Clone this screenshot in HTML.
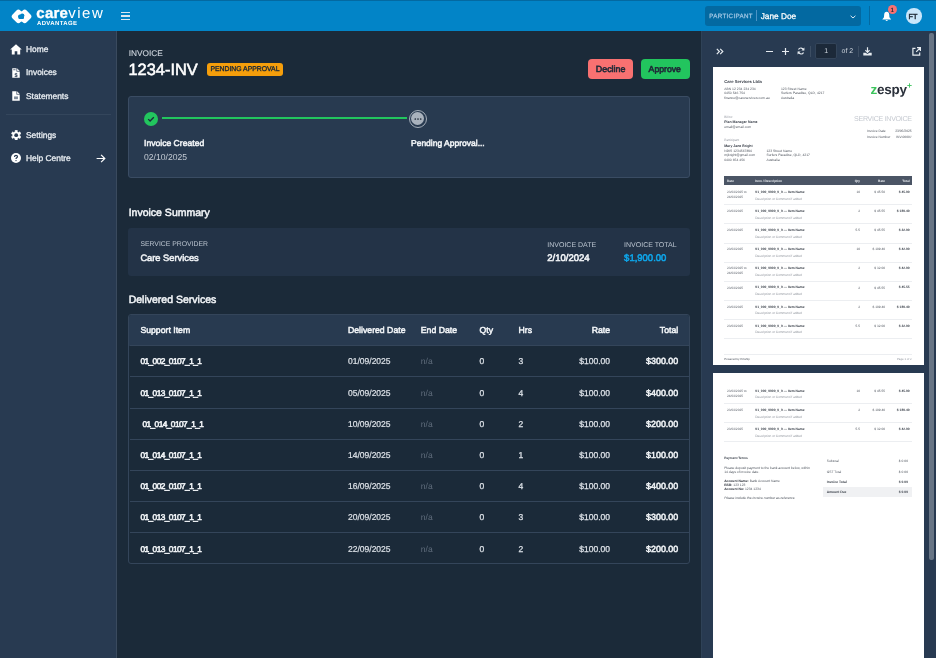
<!DOCTYPE html>
<html><head><meta charset="utf-8">
<style>
*{box-sizing:border-box;margin:0;padding:0}
.L{will-change:transform}
html,body{width:936px;height:658px;overflow:hidden;background:#1b2a39;font-family:"Liberation Sans",sans-serif;color:#fff;text-rendering:geometricPrecision}
.a{position:absolute;line-height:1;white-space:nowrap}
#hdr{position:absolute;left:0;top:0;width:936px;height:31px;background:#0284c7;border-top:1px solid #0369a1}
#side{position:absolute;left:0;top:31px;width:117px;height:627px;background:#283a51;border-right:1px solid #3a4a5e}
#main{position:absolute;left:117px;top:31px;width:584px;height:627px;background:#1b2a39}
#pdf{position:absolute;left:701px;top:31px;width:235px;height:627px;background:#283a51;border-left:1px solid #2f4257;text-rendering:geometricPrecision}
.b{font-weight:bold}
</style></head><body>
<div id="hdr" class="L">
 <svg class="a" style="left:0px;top:-1.00px" width="40" height="31" viewBox="0 0 40 31"><g fill="#fff"><rect x="12.9" y="10.9" width="11" height="11" rx="2.8" transform="rotate(45 18.4 16.4)"/><rect x="19.2" y="10.9" width="11" height="11" rx="2.8" transform="rotate(45 24.7 16.4)"/><rect x="18" y="11.5" width="7" height="10" /></g><g fill="#0284c7"><rect x="18.4" y="15.2" width="5.6" height="3.9" rx="1.1"/><circle cx="19.9" cy="16.4" r="1.8"/><circle cx="22.2" cy="15.6" r="2.2"/></g></svg>
 <div class="a" style="left:36.3px;top:4.50px;font-size:15px;font-weight:bold;letter-spacing:0.25px;-webkit-text-stroke:0.35px #fff">care<span style="font-weight:normal;letter-spacing:1.55px;-webkit-text-stroke:0">view</span></div>
 <div class="a" style="left:37px;top:20.00px;font-size:6px;font-weight:bold;letter-spacing:0.35px">ADVANTAGE</div>
 <div class="a" style="left:121.3px;top:11.20px;width:8.8px;height:1.3px;background:#dbe8f2"></div>
 <div class="a" style="left:121.3px;top:14.40px;width:8.8px;height:1.3px;background:#dbe8f2"></div>
 <div class="a" style="left:121.3px;top:17.60px;width:8.8px;height:1.3px;background:#dbe8f2"></div>
 <div class="a" style="left:705.3px;top:5.20px;width:156px;height:19.4px;background:#0369a1;border-radius:3px"></div>
 <div class="a" style="left:709.2px;top:13.02px;font-size:6.2px;color:#9fc6e4;letter-spacing:0.35px;-webkit-text-stroke:0.25px #9fc6e4">PARTICIPANT</div>
 <div class="a" style="left:756.3px;top:9.10px;width:1px;height:11.3px;background:#4a93c6"></div>
 <div class="a" style="left:760.7px;top:10.74px;font-size:8.3px;color:#fff;-webkit-text-stroke:0.25px #fff">Jane Doe</div>
 <svg class="a" style="left:849.6px;top:14.10px" width="6" height="4" viewBox="0 0 6 4"><path d="M0.6 0.8 L3 3 L5.4 0.8" stroke="#dce9f3" stroke-width="1" fill="none"/></svg>
 <div class="a" style="left:869.2px;top:5.20px;width:1px;height:19px;background:#0369a1"></div>
 <svg class="a" style="left:881.8px;top:9.60px" width="9.4" height="10.5" viewBox="0 0 10 11"><path d="M5 0.8 C3.3 0.8 2.4 2.2 2.3 4 L2.1 6.6 L0.3 8.9 L9.7 8.9 L7.9 6.6 L7.7 4 C7.6 2.2 6.7 0.8 5 0.8 Z" fill="#fff"/><path d="M3.8 9.6 C3.8 10.8 6.2 10.8 6.2 9.6 Z" fill="#fff"/></svg>
 <div class="a" style="left:887.9px;top:4.30px;width:9px;height:9px;border-radius:50%;background:#f87171"></div>
 <div class="a" style="left:890.6px;top:6.50px;font-size:6.2px;font-weight:bold;color:#1f2a37">1</div>
 <div class="a" style="left:906px;top:7.00px;width:15.6px;height:15.6px;border-radius:50%;background:#c9e6fb"></div>
 <div class="a" style="left:908.6px;top:11.70px;font-size:7.3px;color:#1f2a37;-webkit-text-stroke:0.45px #1f2a37">FT</div>
</div>
<div id="side" class="L">
 <svg class="a" style="left:10px;top:12.60px" width="12" height="11" viewBox="0 0 12 11"><path d="M6 0.3 L11.8 5.6 L10.2 5.6 L10.2 10.5 L7.3 10.5 L7.3 7.3 L4.7 7.3 L4.7 10.5 L1.8 10.5 L1.8 5.6 L0.2 5.6 Z" fill="#fff"/></svg>
 <div class="a" style="left:26px;top:13.77px;font-size:8.4px;color:#e8edf2;-webkit-text-stroke:0.3px #e8edf2">Home</div>
 <svg class="a" style="left:11.6px;top:36.80px" width="8" height="10" viewBox="0 0 9 11" preserveAspectRatio="none"><path d="M0.3 0.3 L5.6 0.3 L8.7 3.4 L8.7 10.7 L0.3 10.7 Z" fill="#fff"/><path d="M5.3 0 L5.3 3.7 L9 3.7" fill="none" stroke="#283a51" stroke-width="0.7"/><text x="4.5" y="9.6" font-size="6.2" font-family="Liberation Sans" font-weight="bold" fill="#283a51" text-anchor="middle">$</text><rect x="1.4" y="1.6" width="2.6" height="0.8" fill="#283a51"/></svg>
 <div class="a" style="left:26px;top:37.17px;font-size:8.4px;color:#e8edf2;-webkit-text-stroke:0.3px #e8edf2">Invoices</div>
 <svg class="a" style="left:11.6px;top:60.00px" width="8" height="10" viewBox="0 0 9 11" preserveAspectRatio="none"><path d="M0.3 0.3 L5.6 0.3 L8.7 3.4 L8.7 10.7 L0.3 10.7 Z" fill="#fff"/><path d="M5.3 0 L5.3 3.7 L9 3.7" fill="none" stroke="#283a51" stroke-width="0.7"/><rect x="2.3" y="6" width="4.4" height="3" fill="#7d8a9a"/></svg>
 <div class="a" style="left:26px;top:60.57px;font-size:8.4px;color:#e8edf2;-webkit-text-stroke:0.3px #e8edf2">Statements</div>
 <div class="a" style="left:6px;top:83.30px;width:105px;height:1px;background:#34465c"></div>
 <svg class="a" style="left:10.6px;top:98.80px" width="10.4" height="10.4" viewBox="0 0 10.4 10.4"><path d="M4.08 0.33 L6.32 0.33 L6.25 1.76 L7.66 2.57 L8.86 1.79 L9.98 3.74 L8.71 4.39 L8.71 6.01 L9.98 6.66 L8.86 8.61 L7.66 7.83 L6.25 8.64 L6.32 10.07 L4.08 10.07 L4.15 8.64 L2.74 7.83 L1.54 8.61 L0.42 6.66 L1.69 6.01 L1.69 4.39 L0.42 3.74 L1.54 1.79 L2.74 2.57 L4.15 1.76 Z" fill="#fff" stroke="#fff" stroke-width="0.5" stroke-linejoin="round"/><circle cx="5.2" cy="5.2" r="1.9" fill="#283a51"/></svg>
 <div class="a" style="left:26px;top:99.57px;font-size:8.4px;color:#e8edf2;-webkit-text-stroke:0.3px #e8edf2">Settings</div>
 <svg class="a" style="left:10.9px;top:122.20px" width="10" height="10" viewBox="0 0 10 10"><circle cx="5" cy="5" r="5" fill="#fff"/><path d="M3.5 4 C3.5 3 4.2 2.4 5 2.4 C5.9 2.4 6.5 3 6.5 3.8 C6.5 4.6 5.6 4.8 5.2 5.3 C5.05 5.5 5 5.7 5 6.1" stroke="#283a51" stroke-width="1.2" fill="none"/><circle cx="5" cy="7.6" r="0.7" fill="#283a51"/></svg>
 <div class="a" style="left:26px;top:122.87px;font-size:8.4px;color:#e8edf2;-webkit-text-stroke:0.3px #e8edf2">Help Centre</div>
 <svg class="a" style="left:96px;top:122.60px" width="10" height="9" viewBox="0 0 10 9"><path d="M0.6 4.5 L8.8 4.5 M5.1 0.8 L8.8 4.5 L5.1 8.2" stroke="#fff" stroke-width="1.2" fill="none"/></svg>
</div>
<div id="main" class="L">
 <div class="a" style="top:17.79px;font-size:8.3px;color:#d0d7df;left:11.70px;-webkit-text-stroke:0.1px #d0d7df;">INVOICE</div>
 <div class="a" style="top:30.91px;font-size:16.4px;color:#ffffff;left:11.50px;-webkit-text-stroke:0.55px #ffffff;">1234-INV</div>
 <div class="a" style="left:89.90px;top:31.70px;width:76.20px;height:13.80px;background:#f59e0b;border-radius:3px"></div>
 <div class="a" style="top:36.42px;font-size:6.85px;color:#1f2a37;left:93.40px;-webkit-text-stroke:0.35px #1f2a37;">PENDING APPROVAL</div>
 <div class="a" style="left:471.00px;top:28.20px;width:45.00px;height:19.50px;background:#f87171;border-radius:4px"></div>
 <div class="a" style="top:34.19px;font-size:8.9px;color:#1f2a37;left:478.80px;-webkit-text-stroke:0.6px #1f2a37;">Decline</div>
 <div class="a" style="left:524.00px;top:28.20px;width:48.70px;height:19.50px;background:#22c55e;border-radius:4px"></div>
 <div class="a" style="top:34.23px;font-size:8.7px;color:#1f2a37;left:531.60px;-webkit-text-stroke:0.6px #1f2a37;">Approve</div>
 <div class="a" style="left:11.10px;top:65.00px;width:561.80px;height:81.80px;background:#283a50;border:1px solid #3a4c63;border-radius:3px"></div>
 <div class="a" style="left:27.00px;top:80.50px;width:14.00px;height:14.00px;background:#22c55e;border-radius:50%"></div>
 <svg class="a" style="left:30.00px;top:83.50px" width="8" height="8" viewBox="0 0 8 8"><path d="M1.2 4.1 L3.1 6 L6.8 2.2" stroke="#1c2939" stroke-width="1.3" fill="none"/></svg>
 <div class="a" style="left:44.70px;top:86.20px;width:245.30px;height:2.00px;background:#22c55e;"></div>
 <div class="a" style="left:291.70px;top:78.60px;width:18.40px;height:18.40px;background:#283a50;border:1px solid #a3adb8;border-radius:50%"></div>
 <div class="a" style="left:294.40px;top:81.30px;width:13.00px;height:13.00px;background:#a9b2bd;border-radius:50%"></div>
 <svg class="a" style="left:295.90px;top:85.70px" width="10" height="4" viewBox="0 0 10 4"><circle cx="2.3" cy="2" r="0.85" fill="#1f2a37"/><circle cx="5" cy="2" r="0.85" fill="#1f2a37"/><circle cx="7.7" cy="2" r="0.85" fill="#1f2a37"/></svg>
 <div class="a" style="top:108.34px;font-size:8.6px;color:#f1f4f7;left:27.00px;-webkit-text-stroke:0.5px #f1f4f7;">Invoice Created</div>
 <div class="a" style="top:122.34px;font-size:8.6px;color:#c5ccd5;left:27.00px;">02/10/2025</div>
 <div class="a" style="top:108.36px;font-size:8.5px;color:#f1f4f7;left:294.00px;-webkit-text-stroke:0.5px #f1f4f7;">Pending Approval...</div>
 <div class="a" style="top:176.84px;font-size:10.5px;color:#f1f4f7;left:11.70px;-webkit-text-stroke:0.5px #f1f4f7;">Invoice Summary</div>
 <div class="a" style="left:11.40px;top:197.00px;width:561.90px;height:48.20px;background:#233347;border-radius:3px"></div>
 <div class="a" style="top:210.72px;font-size:6.85px;color:#b9c3ce;left:23.40px;">SERVICE PROVIDER</div>
 <div class="a" style="top:222.93px;font-size:9.3px;color:#f1f4f7;left:23.40px;-webkit-text-stroke:0.5px #f1f4f7;">Care Services</div>
 <div class="a" style="top:210.69px;font-size:7.0px;color:#b9c3ce;left:430.30px;">INVOICE DATE</div>
 <div class="a" style="top:223.10px;font-size:9.5px;color:#f1f4f7;left:430.30px;-webkit-text-stroke:0.55px #f1f4f7;">2/10/2024</div>
 <div class="a" style="top:210.69px;font-size:7.0px;color:#b9c3ce;left:507.10px;">INVOICE TOTAL</div>
 <div class="a" style="top:223.10px;font-size:9.5px;color:#0ea5e9;left:507.10px;-webkit-text-stroke:0.55px #0ea5e9;">$1,900.00</div>
 <div class="a" style="top:263.64px;font-size:10.5px;color:#f1f4f7;left:11.70px;-webkit-text-stroke:0.5px #f1f4f7;">Delivered Services</div>
 <div class="a" style="left:11.30px;top:282.80px;width:561.60px;height:249.80px;background:transparent;border:1px solid #34455a;border-radius:3px"></div>
 <div class="a" style="left:12.30px;top:283.80px;width:559.60px;height:30.80px;background:#283a50;border-radius:2px 2px 0 0"></div>
 <div class="a" style="left:12.60px;top:314.10px;width:559.10px;height:1.00px;background:#34455a;"></div>
 <div class="a" style="top:294.83px;font-size:8.7px;color:#f1f4f7;left:23.40px;-webkit-text-stroke:0.5px #f1f4f7;">Support Item</div>
 <div class="a" style="top:294.83px;font-size:8.7px;color:#f1f4f7;left:231.00px;-webkit-text-stroke:0.5px #f1f4f7;">Delivered Date</div>
 <div class="a" style="top:294.83px;font-size:8.7px;color:#f1f4f7;left:303.80px;-webkit-text-stroke:0.5px #f1f4f7;">End Date</div>
 <div class="a" style="top:294.83px;font-size:8.7px;color:#f1f4f7;left:362.50px;-webkit-text-stroke:0.5px #f1f4f7;">Qty</div>
 <div class="a" style="top:294.83px;font-size:8.7px;color:#f1f4f7;left:401.60px;-webkit-text-stroke:0.5px #f1f4f7;">Hrs</div>
 <div class="a" style="top:294.83px;font-size:8.7px;color:#f1f4f7;right:91.00px;-webkit-text-stroke:0.5px #f1f4f7;">Rate</div>
 <div class="a" style="top:294.83px;font-size:8.7px;color:#f1f4f7;right:22.80px;-webkit-text-stroke:0.5px #f1f4f7;">Total</div>
 <div class="a" style="left:12.60px;top:345.30px;width:559.10px;height:1.00px;background:#34455a;"></div>
 <div class="a" style="top:326.49px;font-size:8.3px;color:#f1f4f7;left:23.40px;-webkit-text-stroke:0.55px #f1f4f7;letter-spacing:-0.55px;">01_002_0107_1_1</div>
 <div class="a" style="top:326.46px;font-size:8.5px;color:#dde2e8;left:231.00px;-webkit-text-stroke:0.2px #dde2e8;">01/09/2025</div>
 <div class="a" style="top:326.46px;font-size:8.5px;color:#5f6c7b;left:303.80px;">n/a</div>
 <div class="a" style="top:326.46px;font-size:8.5px;color:#dde2e8;left:362.50px;-webkit-text-stroke:0.25px #dde2e8;">0</div>
 <div class="a" style="top:326.46px;font-size:8.5px;color:#dde2e8;left:401.60px;-webkit-text-stroke:0.25px #dde2e8;">3</div>
 <div class="a" style="top:326.46px;font-size:8.5px;color:#dde2e8;right:91.00px;-webkit-text-stroke:0.25px #dde2e8;">$100.00</div>
 <div class="a" style="top:326.39px;font-size:8.9px;color:#f1f4f7;right:22.80px;-webkit-text-stroke:0.5px #f1f4f7;">$300.00</div>
 <div class="a" style="left:12.60px;top:376.50px;width:559.10px;height:1.00px;background:#34455a;"></div>
 <div class="a" style="top:357.69px;font-size:8.3px;color:#f1f4f7;left:23.40px;-webkit-text-stroke:0.55px #f1f4f7;letter-spacing:-0.55px;">01_013_0107_1_1</div>
 <div class="a" style="top:357.66px;font-size:8.5px;color:#dde2e8;left:231.00px;-webkit-text-stroke:0.2px #dde2e8;">05/09/2025</div>
 <div class="a" style="top:357.66px;font-size:8.5px;color:#5f6c7b;left:303.80px;">n/a</div>
 <div class="a" style="top:357.66px;font-size:8.5px;color:#dde2e8;left:362.50px;-webkit-text-stroke:0.25px #dde2e8;">0</div>
 <div class="a" style="top:357.66px;font-size:8.5px;color:#dde2e8;left:401.60px;-webkit-text-stroke:0.25px #dde2e8;">4</div>
 <div class="a" style="top:357.66px;font-size:8.5px;color:#dde2e8;right:91.00px;-webkit-text-stroke:0.25px #dde2e8;">$100.00</div>
 <div class="a" style="top:357.59px;font-size:8.9px;color:#f1f4f7;right:22.80px;-webkit-text-stroke:0.5px #f1f4f7;">$400.00</div>
 <div class="a" style="left:12.60px;top:407.70px;width:559.10px;height:1.00px;background:#34455a;"></div>
 <div class="a" style="top:388.89px;font-size:8.3px;color:#f1f4f7;left:25.40px;-webkit-text-stroke:0.55px #f1f4f7;letter-spacing:-0.55px;">01_014_0107_1_1</div>
 <div class="a" style="top:388.86px;font-size:8.5px;color:#dde2e8;left:231.00px;-webkit-text-stroke:0.2px #dde2e8;">10/09/2025</div>
 <div class="a" style="top:388.86px;font-size:8.5px;color:#5f6c7b;left:303.80px;">n/a</div>
 <div class="a" style="top:388.86px;font-size:8.5px;color:#dde2e8;left:362.50px;-webkit-text-stroke:0.25px #dde2e8;">0</div>
 <div class="a" style="top:388.86px;font-size:8.5px;color:#dde2e8;left:401.60px;-webkit-text-stroke:0.25px #dde2e8;">2</div>
 <div class="a" style="top:388.86px;font-size:8.5px;color:#dde2e8;right:91.00px;-webkit-text-stroke:0.25px #dde2e8;">$100.00</div>
 <div class="a" style="top:388.79px;font-size:8.9px;color:#f1f4f7;right:22.80px;-webkit-text-stroke:0.5px #f1f4f7;">$200.00</div>
 <div class="a" style="left:12.60px;top:438.90px;width:559.10px;height:1.00px;background:#34455a;"></div>
 <div class="a" style="top:420.09px;font-size:8.3px;color:#f1f4f7;left:23.40px;-webkit-text-stroke:0.55px #f1f4f7;letter-spacing:-0.55px;">01_014_0107_1_1</div>
 <div class="a" style="top:420.06px;font-size:8.5px;color:#dde2e8;left:231.00px;-webkit-text-stroke:0.2px #dde2e8;">14/09/2025</div>
 <div class="a" style="top:420.06px;font-size:8.5px;color:#5f6c7b;left:303.80px;">n/a</div>
 <div class="a" style="top:420.06px;font-size:8.5px;color:#dde2e8;left:362.50px;-webkit-text-stroke:0.25px #dde2e8;">0</div>
 <div class="a" style="top:420.06px;font-size:8.5px;color:#dde2e8;left:401.60px;-webkit-text-stroke:0.25px #dde2e8;">1</div>
 <div class="a" style="top:420.06px;font-size:8.5px;color:#dde2e8;right:91.00px;-webkit-text-stroke:0.25px #dde2e8;">$100.00</div>
 <div class="a" style="top:419.99px;font-size:8.9px;color:#f1f4f7;right:22.80px;-webkit-text-stroke:0.5px #f1f4f7;">$100.00</div>
 <div class="a" style="left:12.60px;top:470.10px;width:559.10px;height:1.00px;background:#34455a;"></div>
 <div class="a" style="top:451.29px;font-size:8.3px;color:#f1f4f7;left:23.40px;-webkit-text-stroke:0.55px #f1f4f7;letter-spacing:-0.55px;">01_002_0107_1_1</div>
 <div class="a" style="top:451.26px;font-size:8.5px;color:#dde2e8;left:231.00px;-webkit-text-stroke:0.2px #dde2e8;">16/09/2025</div>
 <div class="a" style="top:451.26px;font-size:8.5px;color:#5f6c7b;left:303.80px;">n/a</div>
 <div class="a" style="top:451.26px;font-size:8.5px;color:#dde2e8;left:362.50px;-webkit-text-stroke:0.25px #dde2e8;">0</div>
 <div class="a" style="top:451.26px;font-size:8.5px;color:#dde2e8;left:401.60px;-webkit-text-stroke:0.25px #dde2e8;">4</div>
 <div class="a" style="top:451.26px;font-size:8.5px;color:#dde2e8;right:91.00px;-webkit-text-stroke:0.25px #dde2e8;">$100.00</div>
 <div class="a" style="top:451.19px;font-size:8.9px;color:#f1f4f7;right:22.80px;-webkit-text-stroke:0.5px #f1f4f7;">$400.00</div>
 <div class="a" style="left:12.60px;top:501.30px;width:559.10px;height:1.00px;background:#34455a;"></div>
 <div class="a" style="top:482.49px;font-size:8.3px;color:#f1f4f7;left:23.40px;-webkit-text-stroke:0.55px #f1f4f7;letter-spacing:-0.55px;">01_013_0107_1_1</div>
 <div class="a" style="top:482.46px;font-size:8.5px;color:#dde2e8;left:231.00px;-webkit-text-stroke:0.2px #dde2e8;">20/09/2025</div>
 <div class="a" style="top:482.46px;font-size:8.5px;color:#5f6c7b;left:303.80px;">n/a</div>
 <div class="a" style="top:482.46px;font-size:8.5px;color:#dde2e8;left:362.50px;-webkit-text-stroke:0.25px #dde2e8;">0</div>
 <div class="a" style="top:482.46px;font-size:8.5px;color:#dde2e8;left:401.60px;-webkit-text-stroke:0.25px #dde2e8;">3</div>
 <div class="a" style="top:482.46px;font-size:8.5px;color:#dde2e8;right:91.00px;-webkit-text-stroke:0.25px #dde2e8;">$100.00</div>
 <div class="a" style="top:482.39px;font-size:8.9px;color:#f1f4f7;right:22.80px;-webkit-text-stroke:0.5px #f1f4f7;">$300.00</div>
 <div class="a" style="top:513.69px;font-size:8.3px;color:#f1f4f7;left:23.40px;-webkit-text-stroke:0.55px #f1f4f7;letter-spacing:-0.55px;">01_013_0107_1_1</div>
 <div class="a" style="top:513.66px;font-size:8.5px;color:#dde2e8;left:231.00px;-webkit-text-stroke:0.2px #dde2e8;">22/09/2025</div>
 <div class="a" style="top:513.66px;font-size:8.5px;color:#5f6c7b;left:303.80px;">n/a</div>
 <div class="a" style="top:513.66px;font-size:8.5px;color:#dde2e8;left:362.50px;-webkit-text-stroke:0.25px #dde2e8;">0</div>
 <div class="a" style="top:513.66px;font-size:8.5px;color:#dde2e8;left:401.60px;-webkit-text-stroke:0.25px #dde2e8;">2</div>
 <div class="a" style="top:513.66px;font-size:8.5px;color:#dde2e8;right:91.00px;-webkit-text-stroke:0.25px #dde2e8;">$100.00</div>
 <div class="a" style="top:513.59px;font-size:8.9px;color:#f1f4f7;right:22.80px;-webkit-text-stroke:0.5px #f1f4f7;">$200.00</div>
</div>
<div id="pdf" class="L">
 <svg class="a" style="left:14.40px;top:17.00px" width="8" height="7" viewBox="0 0 8 7"><path d="M0.8 0.8 L3.4 3.5 L0.8 6.2 M4.2 0.8 L6.8 3.5 L4.2 6.2" stroke="#e6ebf0" stroke-width="1.2" fill="none"/></svg>
 <div class="a" style="left:63.90px;top:19.80px;width:7px;height:1.2px;background:#e6ebf0"></div>
 <svg class="a" style="left:79.50px;top:16.80px" width="7" height="7" viewBox="0 0 7 7"><path d="M3.5 0 V7 M0 3.5 H7" stroke="#e6ebf0" stroke-width="1.2"/></svg>
 <svg class="a" style="left:94.60px;top:16.30px" width="8" height="8" viewBox="0 0 8 8"><path d="M6.6 3.2 A2.7 2.7 0 0 0 1.5 2.6 M1.4 4.8 A2.7 2.7 0 0 0 6.5 5.4" stroke="#e6ebf0" stroke-width="1.2" fill="none"/><path d="M7.4 0.6 V3.6 H4.4 Z M0.6 7.4 V4.4 H3.6 Z" fill="#e6ebf0"/></svg>
 <div class="a" style="left:108.20px;top:15.30px;width:1px;height:10.5px;background:#3d4e63"></div>
 <div class="a" style="left:112.60px;top:12.30px;width:22.7px;height:15.8px;background:#1c2939;border:1px solid #334459;border-radius:2px"></div>
 <div class="a" style="left:122.20px;top:16.70px;font-size:7px;color:#cfd6de">1</div>
 <div class="a" style="left:139.50px;top:16.70px;font-size:7px;color:#cfd6de">of 2</div>
 <div class="a" style="left:155.50px;top:15.30px;width:1px;height:10.5px;background:#3d4e63"></div>
 <svg class="a" style="left:160.70px;top:16.00px" width="9" height="9" viewBox="0 0 9 9"><path d="M4.5 0.3 V5.2 M2.4 3.2 L4.5 5.3 L6.6 3.2" stroke="#e6ebf0" stroke-width="1.2" fill="none"/><path d="M0.3 5.8 H2.6 L4.5 7 L6.4 5.8 H8.7 V8.5 H0.3 Z" fill="#e6ebf0"/></svg>
 <svg class="a" style="left:210.30px;top:16.00px" width="9" height="9" viewBox="0 0 9 9"><path d="M3.5 1.3 H0.9 V8.1 H7.7 V5.5" stroke="#e6ebf0" stroke-width="1.2" fill="none"/><path d="M4.2 4.8 L8 1 M5 0.6 H8.4 V4" stroke="#e6ebf0" stroke-width="1.2" fill="none"/></svg>
 <div class="a" style="left:227.40px;top:2.00px;width:4.3px;height:527px;background:#687585;border-radius:2px"></div>
 <div class="a" style="left:11.00px;top:36.30px;width:210.50px;height:297.80px;background:#fff"></div>
 <div class="a" style="left:11.00px;top:342.00px;width:210.50px;height:285.00px;background:#fff"></div>
 <div class="a" style="top:49.10px;font-size:4.2px;color:#3b414b;left:22.20px;font-weight:bold;">Care Services Ltda</div>
 <div class="a" style="top:57.00px;font-size:3.4px;color:#50565f;left:22.20px;">ABN 12 234 234 234</div>
 <div class="a" style="top:61.35px;font-size:3.4px;color:#50565f;left:22.20px;">0450 546 754</div>
 <div class="a" style="top:65.70px;font-size:3.4px;color:#50565f;left:22.20px;">finance@careservices.com.au</div>
 <div class="a" style="top:57.00px;font-size:3.4px;color:#50565f;left:78.90px;">123 Street Name</div>
 <div class="a" style="top:61.35px;font-size:3.4px;color:#50565f;left:78.90px;">Surfers Paradise, QLD, 4217</div>
 <div class="a" style="top:65.70px;font-size:3.4px;color:#50565f;left:78.90px;">Australia</div>
 <div class="a" style="top:84.50px;font-size:3.2px;color:#9499a1;left:22.20px;">Bill to:</div>
 <div class="a" style="top:89.95px;font-size:3.5px;color:#3b414b;left:22.20px;font-weight:bold;">Plan Manager Name</div>
 <div class="a" style="top:95.30px;font-size:3.4px;color:#50565f;left:22.20px;">email@email.com</div>
 <div class="a" style="top:108.30px;font-size:3.2px;color:#9499a1;left:22.20px;">Participant</div>
 <div class="a" style="top:113.55px;font-size:3.5px;color:#3b414b;left:22.20px;font-weight:bold;">Mary Jane Bright</div>
 <div class="a" style="top:118.70px;font-size:3.4px;color:#50565f;left:22.20px;">NDIS 1234567890</div>
 <div class="a" style="top:123.15px;font-size:3.4px;color:#50565f;left:22.20px;">mjbright@gmail.com</div>
 <div class="a" style="top:127.60px;font-size:3.4px;color:#50565f;left:22.20px;">0400 654 456</div>
 <div class="a" style="top:118.70px;font-size:3.4px;color:#50565f;left:64.40px;">123 Street Name</div>
 <div class="a" style="top:123.15px;font-size:3.4px;color:#50565f;left:64.40px;">Surfers Paradise, QLD, 4217</div>
 <div class="a" style="top:127.60px;font-size:3.4px;color:#50565f;left:64.40px;">Australia</div>
 <div class="a" style="left:168.40px;top:51.70px;font-size:13.5px;font-weight:bold;color:#2b313b;letter-spacing:-0.2px"><span style="color:#3cc45c">z</span>espy</div>
 <svg class="a" style="left:204.50px;top:52.20px" width="5" height="5" viewBox="0 0 5 5"><path d="M2.5 0.3 V4.7 M0.3 2.5 H4.7" stroke="#3cc45c" stroke-width="0.9"/></svg>
 <div class="a" style="top:85.15px;font-size:7.1px;color:#c5c9d0;right:24.30px;letter-spacing:-0.3px;">SERVICE INVOICE</div>
 <div class="a" style="top:98.72px;font-size:3.35px;color:#50565f;left:165.00px;">Invoice Date</div>
 <div class="a" style="top:98.75px;font-size:3.3px;color:#50565f;right:24.30px;">23/05/2025</div>
 <div class="a" style="top:105.12px;font-size:3.35px;color:#50565f;left:165.00px;">Invoice Number</div>
 <div class="a" style="top:105.15px;font-size:3.3px;color:#50565f;right:24.30px;">INV-0000#</div>
 <div class="a" style="left:22.30px;top:144.50px;width:188.10px;height:9.50px;background:#4b5565"></div>
 <div class="a" style="top:148.70px;font-size:3.2px;color:#e8ebef;left:25.00px;font-weight:bold;">Date</div>
 <div class="a" style="top:148.70px;font-size:3.2px;color:#e8ebef;left:53.30px;font-weight:bold;">Item / Description</div>
 <div class="a" style="top:148.70px;font-size:3.2px;color:#e8ebef;right:76.00px;font-weight:bold;">Qty</div>
 <div class="a" style="top:148.70px;font-size:3.2px;color:#e8ebef;right:51.00px;font-weight:bold;">Rate</div>
 <div class="a" style="top:148.70px;font-size:3.2px;color:#e8ebef;right:26.30px;font-weight:bold;">Total</div>
 <div class="a" style="top:160.00px;font-size:3.2px;color:#5d636c;left:25.00px;">23/03/2025 to</div>
 <div class="a" style="top:165.00px;font-size:3.2px;color:#5d636c;left:25.00px;">24/03/2025</div>
 <div class="a" style="top:159.95px;font-size:3.3px;color:#3b414b;left:53.30px;font-weight:bold;font-weight:bold;">01_000_0000_0_0 &mdash; Item Name</div>
 <div class="a" style="top:166.50px;font-size:3.2px;color:#9499a1;left:53.30px;">Description or Comment if added</div>
 <div class="a" style="top:160.00px;font-size:3.2px;color:#50565f;right:76.00px;">10</div>
 <div class="a" style="top:160.00px;font-size:3.2px;color:#50565f;right:51.00px;">$ 45.50</div>
 <div class="a" style="top:159.95px;font-size:3.3px;color:#3b414b;right:26.30px;font-weight:bold;">$ 45.00</div>
 <div class="a" style="left:22.30px;top:173.30px;width:188.10px;height:0.70px;background:#eceef1"></div>
 <div class="a" style="top:179.10px;font-size:3.2px;color:#5d636c;left:25.00px;">23/03/2025</div>
 <div class="a" style="top:179.05px;font-size:3.3px;color:#3b414b;left:53.30px;font-weight:bold;font-weight:bold;">01_000_0000_0_0 &mdash; Item Name</div>
 <div class="a" style="top:185.60px;font-size:3.2px;color:#9499a1;left:53.30px;">Description or Comment if added</div>
 <div class="a" style="top:179.10px;font-size:3.2px;color:#50565f;right:76.00px;">2</div>
 <div class="a" style="top:179.10px;font-size:3.2px;color:#50565f;right:51.00px;">$ 45.55</div>
 <div class="a" style="top:179.05px;font-size:3.3px;color:#3b414b;right:26.30px;font-weight:bold;">$ 180.40</div>
 <div class="a" style="left:22.30px;top:192.40px;width:188.10px;height:0.70px;background:#eceef1"></div>
 <div class="a" style="top:198.20px;font-size:3.2px;color:#5d636c;left:25.00px;">23/03/2025</div>
 <div class="a" style="top:198.15px;font-size:3.3px;color:#3b414b;left:53.30px;font-weight:bold;font-weight:bold;">01_000_0000_0_0 &mdash; Item Name</div>
 <div class="a" style="top:204.70px;font-size:3.2px;color:#9499a1;left:53.30px;">Description or Comment if added</div>
 <div class="a" style="top:198.20px;font-size:3.2px;color:#50565f;right:76.00px;">5.5</div>
 <div class="a" style="top:198.20px;font-size:3.2px;color:#50565f;right:51.00px;">$ 45.55</div>
 <div class="a" style="top:198.15px;font-size:3.3px;color:#3b414b;right:26.30px;font-weight:bold;">$ 32.00</div>
 <div class="a" style="left:22.30px;top:211.50px;width:188.10px;height:0.70px;background:#eceef1"></div>
 <div class="a" style="top:217.30px;font-size:3.2px;color:#5d636c;left:25.00px;">23/03/2025</div>
 <div class="a" style="top:217.25px;font-size:3.3px;color:#3b414b;left:53.30px;font-weight:bold;font-weight:bold;">01_000_0000_0_0 &mdash; Item Name</div>
 <div class="a" style="top:223.80px;font-size:3.2px;color:#9499a1;left:53.30px;">Description or Comment if added</div>
 <div class="a" style="top:217.30px;font-size:3.2px;color:#50565f;right:76.00px;">10</div>
 <div class="a" style="top:217.30px;font-size:3.2px;color:#50565f;right:51.00px;">$ 109.40</div>
 <div class="a" style="top:217.25px;font-size:3.3px;color:#3b414b;right:26.30px;font-weight:bold;">$ 42.00</div>
 <div class="a" style="left:22.30px;top:230.60px;width:188.10px;height:0.70px;background:#eceef1"></div>
 <div class="a" style="top:236.40px;font-size:3.2px;color:#5d636c;left:25.00px;">23/03/2025 to</div>
 <div class="a" style="top:241.40px;font-size:3.2px;color:#5d636c;left:25.00px;">24/03/2025</div>
 <div class="a" style="top:236.35px;font-size:3.3px;color:#3b414b;left:53.30px;font-weight:bold;font-weight:bold;">01_000_0000_0_0 &mdash; Item Name</div>
 <div class="a" style="top:242.90px;font-size:3.2px;color:#9499a1;left:53.30px;">Description or Comment if added</div>
 <div class="a" style="top:236.40px;font-size:3.2px;color:#50565f;right:76.00px;">2</div>
 <div class="a" style="top:236.40px;font-size:3.2px;color:#50565f;right:51.00px;">$ 32.00</div>
 <div class="a" style="top:236.35px;font-size:3.3px;color:#3b414b;right:26.30px;font-weight:bold;">$ 42.00</div>
 <div class="a" style="left:22.30px;top:249.70px;width:188.10px;height:0.70px;background:#eceef1"></div>
 <div class="a" style="top:255.50px;font-size:3.2px;color:#5d636c;left:25.00px;">23/03/2025</div>
 <div class="a" style="top:255.45px;font-size:3.3px;color:#3b414b;left:53.30px;font-weight:bold;font-weight:bold;">01_000_0000_0_0 &mdash; Item Name</div>
 <div class="a" style="top:262.00px;font-size:3.2px;color:#9499a1;left:53.30px;">Description or Comment if added</div>
 <div class="a" style="top:255.50px;font-size:3.2px;color:#50565f;right:76.00px;">2</div>
 <div class="a" style="top:255.50px;font-size:3.2px;color:#50565f;right:51.00px;">$ 45.55</div>
 <div class="a" style="top:255.45px;font-size:3.3px;color:#3b414b;right:26.30px;font-weight:bold;">$ 45.55</div>
 <div class="a" style="left:22.30px;top:268.80px;width:188.10px;height:0.70px;background:#eceef1"></div>
 <div class="a" style="top:274.60px;font-size:3.2px;color:#5d636c;left:25.00px;">23/03/2025</div>
 <div class="a" style="top:274.55px;font-size:3.3px;color:#3b414b;left:53.30px;font-weight:bold;font-weight:bold;">01_000_0000_0_0 &mdash; Item Name</div>
 <div class="a" style="top:281.10px;font-size:3.2px;color:#9499a1;left:53.30px;">Description or Comment if added</div>
 <div class="a" style="top:274.60px;font-size:3.2px;color:#50565f;right:76.00px;">2</div>
 <div class="a" style="top:274.60px;font-size:3.2px;color:#50565f;right:51.00px;">$ 109.40</div>
 <div class="a" style="top:274.55px;font-size:3.3px;color:#3b414b;right:26.30px;font-weight:bold;">$ 180.40</div>
 <div class="a" style="left:22.30px;top:287.90px;width:188.10px;height:0.70px;background:#eceef1"></div>
 <div class="a" style="top:293.70px;font-size:3.2px;color:#5d636c;left:25.00px;">23/03/2025</div>
 <div class="a" style="top:293.65px;font-size:3.3px;color:#3b414b;left:53.30px;font-weight:bold;font-weight:bold;">01_000_0000_0_0 &mdash; Item Name</div>
 <div class="a" style="top:300.20px;font-size:3.2px;color:#9499a1;left:53.30px;">Description or Comment if added</div>
 <div class="a" style="top:293.70px;font-size:3.2px;color:#50565f;right:76.00px;">5.5</div>
 <div class="a" style="top:293.70px;font-size:3.2px;color:#50565f;right:51.00px;">$ 32.00</div>
 <div class="a" style="top:293.65px;font-size:3.3px;color:#3b414b;right:26.30px;font-weight:bold;">$ 32.00</div>
 <div class="a" style="left:22.30px;top:307.00px;width:188.10px;height:0.70px;background:#eceef1"></div>
 <div class="a" style="left:22.30px;top:322.50px;width:188.10px;height:0.60px;background:#eceef1"></div>
 <div class="a" style="top:326.75px;font-size:2.9px;color:#4a505a;left:22.20px;">Powered by Kinship</div>
 <div class="a" style="top:326.75px;font-size:2.9px;color:#9499a1;right:24.30px;">Page 1 of 2</div>
 <div class="a" style="top:358.90px;font-size:3.2px;color:#5d636c;left:25.00px;">23/03/2025 to</div>
 <div class="a" style="top:363.90px;font-size:3.2px;color:#5d636c;left:25.00px;">24/03/2025</div>
 <div class="a" style="top:358.85px;font-size:3.3px;color:#3b414b;left:53.30px;font-weight:bold;font-weight:bold;">01_000_0000_0_0 &mdash; Item Name</div>
 <div class="a" style="top:365.40px;font-size:3.2px;color:#9499a1;left:53.30px;">Description or Comment if added</div>
 <div class="a" style="top:358.90px;font-size:3.2px;color:#50565f;right:76.00px;">10</div>
 <div class="a" style="top:358.90px;font-size:3.2px;color:#50565f;right:51.00px;">$ 45.55</div>
 <div class="a" style="top:358.85px;font-size:3.3px;color:#3b414b;right:26.30px;font-weight:bold;">$ 45.00</div>
 <div class="a" style="left:22.30px;top:372.20px;width:188.10px;height:0.70px;background:#eceef1"></div>
 <div class="a" style="top:378.00px;font-size:3.2px;color:#5d636c;left:25.00px;">23/03/2025</div>
 <div class="a" style="top:377.95px;font-size:3.3px;color:#3b414b;left:53.30px;font-weight:bold;font-weight:bold;">01_000_0000_0_0 &mdash; Item Name</div>
 <div class="a" style="top:384.50px;font-size:3.2px;color:#9499a1;left:53.30px;">Description or Comment if added</div>
 <div class="a" style="top:378.00px;font-size:3.2px;color:#50565f;right:76.00px;">2</div>
 <div class="a" style="top:378.00px;font-size:3.2px;color:#50565f;right:51.00px;">$ 109.40</div>
 <div class="a" style="top:377.95px;font-size:3.3px;color:#3b414b;right:26.30px;font-weight:bold;">$ 180.40</div>
 <div class="a" style="left:22.30px;top:391.30px;width:188.10px;height:0.70px;background:#eceef1"></div>
 <div class="a" style="top:397.10px;font-size:3.2px;color:#5d636c;left:25.00px;">23/03/2025</div>
 <div class="a" style="top:397.05px;font-size:3.3px;color:#3b414b;left:53.30px;font-weight:bold;font-weight:bold;">01_000_0000_0_0 &mdash; Item Name</div>
 <div class="a" style="top:403.60px;font-size:3.2px;color:#9499a1;left:53.30px;">Description or Comment if added</div>
 <div class="a" style="top:397.10px;font-size:3.2px;color:#50565f;right:76.00px;">5.5</div>
 <div class="a" style="top:397.10px;font-size:3.2px;color:#50565f;right:51.00px;">$ 32.00</div>
 <div class="a" style="top:397.05px;font-size:3.3px;color:#3b414b;right:26.30px;font-weight:bold;">$ 42.00</div>
 <div class="a" style="left:22.30px;top:410.40px;width:188.10px;height:0.70px;background:#eceef1"></div>
 <div class="a" style="top:426.10px;font-size:3.2px;color:#3b414b;left:22.20px;font-weight:bold;">Payment Terms</div>
 <div class="a" style="top:435.52px;font-size:3.35px;color:#50565f;left:22.20px;">Please deposit payment to the bank account below, within</div>
 <div class="a" style="top:439.82px;font-size:3.35px;color:#50565f;left:22.20px;">14 days of invoice date.</div>
 <div class="a" style="left:22.20px;top:448.50px;font-size:3.35px;color:#50565f"><b style="color:#2a2f38">Account Name:</b> Bank Account Name</div>
 <div class="a" style="left:22.20px;top:452.70px;font-size:3.35px;color:#50565f"><b style="color:#2a2f38">BSB:</b> 123 123</div>
 <div class="a" style="left:22.20px;top:456.80px;font-size:3.35px;color:#50565f"><b style="color:#2a2f38">Account No:</b> 1234 1234</div>
 <div class="a" style="top:465.62px;font-size:3.35px;color:#50565f;left:22.20px;font-style:italic;">Please include the invoice number as reference</div>
 <div class="a" style="left:120.80px;top:455.80px;width:89.50px;height:9.90px;background:#f0f1f3"></div>
 <div class="a" style="top:429.35px;font-size:3.3px;color:#5d636c;left:124.80px;">Subtotal</div>
 <div class="a" style="top:429.35px;font-size:3.3px;color:#50565f;right:28.00px;">$ 0.00</div>
 <div class="a" style="top:439.65px;font-size:3.3px;color:#5d636c;left:124.80px;">GST Total</div>
 <div class="a" style="top:439.65px;font-size:3.3px;color:#50565f;right:28.00px;">$ 0.00</div>
 <div class="a" style="top:449.85px;font-size:3.3px;color:#3b414b;left:124.80px;font-weight:bold;">Invoice Total</div>
 <div class="a" style="top:449.85px;font-size:3.3px;color:#3b414b;right:28.00px;font-weight:bold;">$ 0.00</div>
 <div class="a" style="top:460.05px;font-size:3.3px;color:#3b414b;left:124.80px;font-weight:bold;">Amount Due</div>
 <div class="a" style="top:460.05px;font-size:3.3px;color:#3b414b;right:28.00px;font-weight:bold;">$ 0.00</div>
</div>
</body></html>
